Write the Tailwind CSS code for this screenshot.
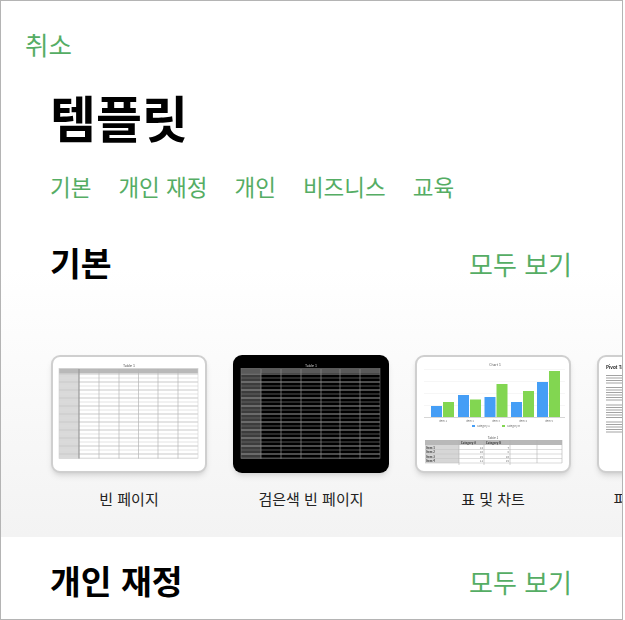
<!DOCTYPE html>
<html lang="ko">
<head>
<meta charset="UTF-8">
<title>템플릿</title>
<script src="https://cdn.jsdelivr.net/npm/@tailwindcss/browser@4"></script>
</head>
<body class="bg-white">
<div class="w-[623px] h-[620px] overflow-hidden border border-[#b4b4b4] bg-white font-['Noto_Sans_CJK_KR','Noto_Sans',sans-serif]">
  <div class="h-[536px] bg-gradient-to-b from-white from-[50%] to-[#f3f3f3] overflow-hidden">
    <div class="pl-[24px] pt-[25px] text-[25.5px] leading-[36px] text-[#55ad64]">취소</div>
    <h1 class="pl-[49px] mt-[19px] text-[50px] leading-[70px] font-bold text-black">템플릿</h1>
    <div class="flex gap-[27px] pl-[49px] mt-[19px] text-[22.5px] leading-[32px] text-[#55ad64]">
      <span>기본</span><span>개인 재정</span><span>개인</span><span>비즈니스</span><span>교육</span>
    </div>
    <div class="flex items-center justify-between pl-[49px] pr-[50px] mt-[36px]">
      <h2 class="text-[33.5px] leading-[48px] font-bold text-black">기본</h2>
      <a class="mt-[4px] text-[26px] leading-[40px] text-[#55ad64]">모두 보기</a>
    </div>
    <div class="flex gap-[26px] pl-[50px] mt-[69px] w-[800px]">
      <div class="w-[156px] shrink-0">
        <div class="h-[118px] rounded-[9px] border-2 border-[#cfcfcf] bg-white shadow-md overflow-hidden">
          <svg viewBox="0 0 156 118" class="w-[156px] h-[118px] -m-[2px] blur-[0.4px]">
            <defs>
              <pattern id="rows" width="139" height="8" patternUnits="userSpaceOnUse" x="8" y="18.5">
                <rect y="0" width="139" height="1" fill="#c8c8c8"/>
                <rect y="4" width="139" height="0.8" fill="#dcdcdc"/>
              </pattern>
              <pattern id="rowsDark" width="139" height="8" patternUnits="userSpaceOnUse" x="8" y="18.5">
                <rect y="0" width="139" height="1" fill="#9a9a9a"/>
                <rect y="4" width="139" height="0.8" fill="#6a6a6a"/>
              </pattern>
            </defs>
            <text x="78" y="12" font-size="3.6" text-anchor="middle" fill="#555">Table 1</text>
            <rect x="8" y="13.5" width="139" height="90" fill="#fff"/>
            <rect x="8" y="13.5" width="20" height="90" fill="#d9d9d9"/>
            <rect x="8" y="13.5" width="139" height="5" fill="#b9b9b9"/>
            <rect x="8" y="18.5" width="139" height="85" fill="url(#rows)"/>
            <path d="M28 14v90M48 14v90M68 14v90M87.500 14v90M107 14v90M127 14v90" stroke="#b4b4b4" stroke-width="0.7"/>
            <path d="M28 14v90" stroke="#8a8a8a" stroke-width="0.8"/>
            <rect x="8" y="13.500" width="139" height="90" fill="none" stroke="#d0d0d0" stroke-width="0.6"/>
          </svg>
        </div>
        <div class="mt-[14px] text-center text-[15px] leading-[24px] text-[#222]">빈 페이지</div>
      </div>
      <div class="w-[156px] shrink-0">
        <div class="h-[118px] rounded-[9px] bg-black shadow-md overflow-hidden">
          <svg viewBox="0 0 156 118" class="w-[156px] h-[118px] blur-[0.4px]">
            <text x="78" y="12" font-size="3.6" text-anchor="middle" fill="#ccc">Table 1</text>
            <rect x="8" y="13.5" width="20" height="90" fill="#3c3c3c"/>
            <rect x="8" y="13.5" width="139" height="5" fill="#5a5a5a"/>
            <rect x="8" y="18.5" width="139" height="85" fill="url(#rowsDark)"/>
            <path d="M28 14v90M48 14v90M68 14v90M88 14v90M107 14v90M127 14v90" stroke="#8c8c8c" stroke-width="0.7"/>
            <rect x="8" y="13.500" width="139" height="90" fill="none" stroke="#777" stroke-width="0.6"/>
          </svg>
        </div>
        <div class="mt-[14px] text-center text-[15px] leading-[24px] text-[#222]">검은색 빈 페이지</div>
      </div>
      <div class="w-[156px] shrink-0">
        <div class="h-[118px] rounded-[9px] border-2 border-[#cfcfcf] bg-white shadow-md overflow-hidden">
          <svg viewBox="0 0 156 118" class="w-[156px] h-[118px] -m-[2px] blur-[0.4px]">
            <text x="80" y="11" font-size="3.4" text-anchor="middle" fill="#555">Chart 1</text>
            <path d="M9 14.500h141M9 26.500h141M9 38.500h141M9 50.500h141" stroke="#ececec" stroke-width="0.5"/>
            <path d="M9 62.500h141" stroke="#bbb" stroke-width="0.6"/>
            <g fill="#459ef6">
              <rect x="16" y="51" width="11" height="11"/><rect x="43" y="40" width="11" height="22"/>
              <rect x="69.500" y="42" width="11" height="20"/><rect x="96" y="47" width="11" height="15"/>
              <rect x="122" y="27" width="11" height="35"/>
            </g>
            <g fill="#82d651">
              <rect x="28" y="47" width="11" height="15"/><rect x="55" y="44.500" width="11" height="17.500"/>
              <rect x="81.500" y="29" width="11" height="33"/><rect x="108" y="36" width="11" height="26"/>
              <rect x="134" y="16" width="11" height="46"/>
            </g>
            <g font-size="2.600" fill="#666" text-anchor="middle">
              <text x="28" y="67">Item 1</text><text x="55" y="67">Item 2</text><text x="81" y="67">Item 3</text>
              <text x="108" y="67">Item 4</text><text x="134" y="67">Item 5</text>
            </g>
            <rect x="57" y="70" width="3" height="2" fill="#459ef6"/><rect x="87" y="70" width="3" height="2" fill="#82d651"/>
            <g font-size="2.500" fill="#666"><text x="62" y="72">Category A</text><text x="92" y="72">Category B</text></g>
            <text x="78" y="83.500" font-size="3.200" text-anchor="middle" fill="#555">Table 1</text>
            <rect x="10" y="85" width="137" height="5" fill="#b8b8b8"/>
            <rect x="10" y="90" width="34" height="18" fill="#d6d6d6"/>
            <path d="M10 94.500h137M10 99h137M10 103.500h137M10 108h137" stroke="#c4c4c4" stroke-width="0.6"/>
            <path d="M44 85v25M69 85v25M95 85v25M122 85v23M147 85v23" stroke="#b4b4b4" stroke-width="0.6"/>
            <g font-size="2.800" fill="#333" font-weight="bold"><text x="11" y="93.500">Item 1</text><text x="11" y="98">Item 2</text><text x="11" y="102.500">Item 3</text><text x="11" y="107">Item 4</text><text x="46" y="88.800">Category A</text><text x="71" y="88.800">Category B</text></g>
            <g font-size="2.600" fill="#555" text-anchor="end"><text x="68" y="93.500">14</text><text x="68" y="98">10</text><text x="68" y="102.500">15</text><text x="68" y="107">11</text><text x="94" y="93.500">7</text><text x="94" y="98">8</text><text x="94" y="102.500">16</text><text x="94" y="107">15</text></g>
          </svg>
        </div>
        <div class="mt-[14px] text-center text-[15px] leading-[24px] text-[#222]">표 및 차트</div>
      </div>
      <div class="w-[156px] shrink-0">
        <div class="h-[118px] rounded-[9px] border-2 border-[#cfcfcf] bg-white shadow-md overflow-hidden">
          <svg viewBox="0 0 156 118" class="w-[156px] h-[118px] -m-[2px] blur-[0.4px]">
            <text x="9" y="14" font-size="4.500" font-weight="bold" fill="#222">Pivot Table Basics</text>
            <g stroke="#999" stroke-width="0.9">
              <path d="M9 20.500h30M9 23h30M9 25.500h30M9 28h24"/>
              <path d="M9 32.500h30M9 35h30M9 37.500h30M9 40h30M9 42.500h30M9 45h16"/>
              <path d="M9 50h30M9 52.500h30M9 55h30M9 57.500h30M9 60h30M9 62.500h20"/>
              <path d="M9 67h30M9 69.500h30M9 72h30M9 74.500h30M9 77h30"/>
            </g>
          </svg>
        </div>
        <div class="mt-[14px] pr-[18px] text-center text-[15px] leading-[24px] text-[#222]">피벗 테이블 기본</div>
      </div>
    </div>
  </div>
  <div class="flex items-center justify-between pl-[49px] pr-[50px] pt-[19px]">
    <h2 class="text-[33.5px] leading-[48px] font-bold text-black">개인 재정</h2>
    <a class="mt-[4px] text-[26px] leading-[40px] text-[#55ad64]">모두 보기</a>
  </div>
</div>
</body>
</html>
